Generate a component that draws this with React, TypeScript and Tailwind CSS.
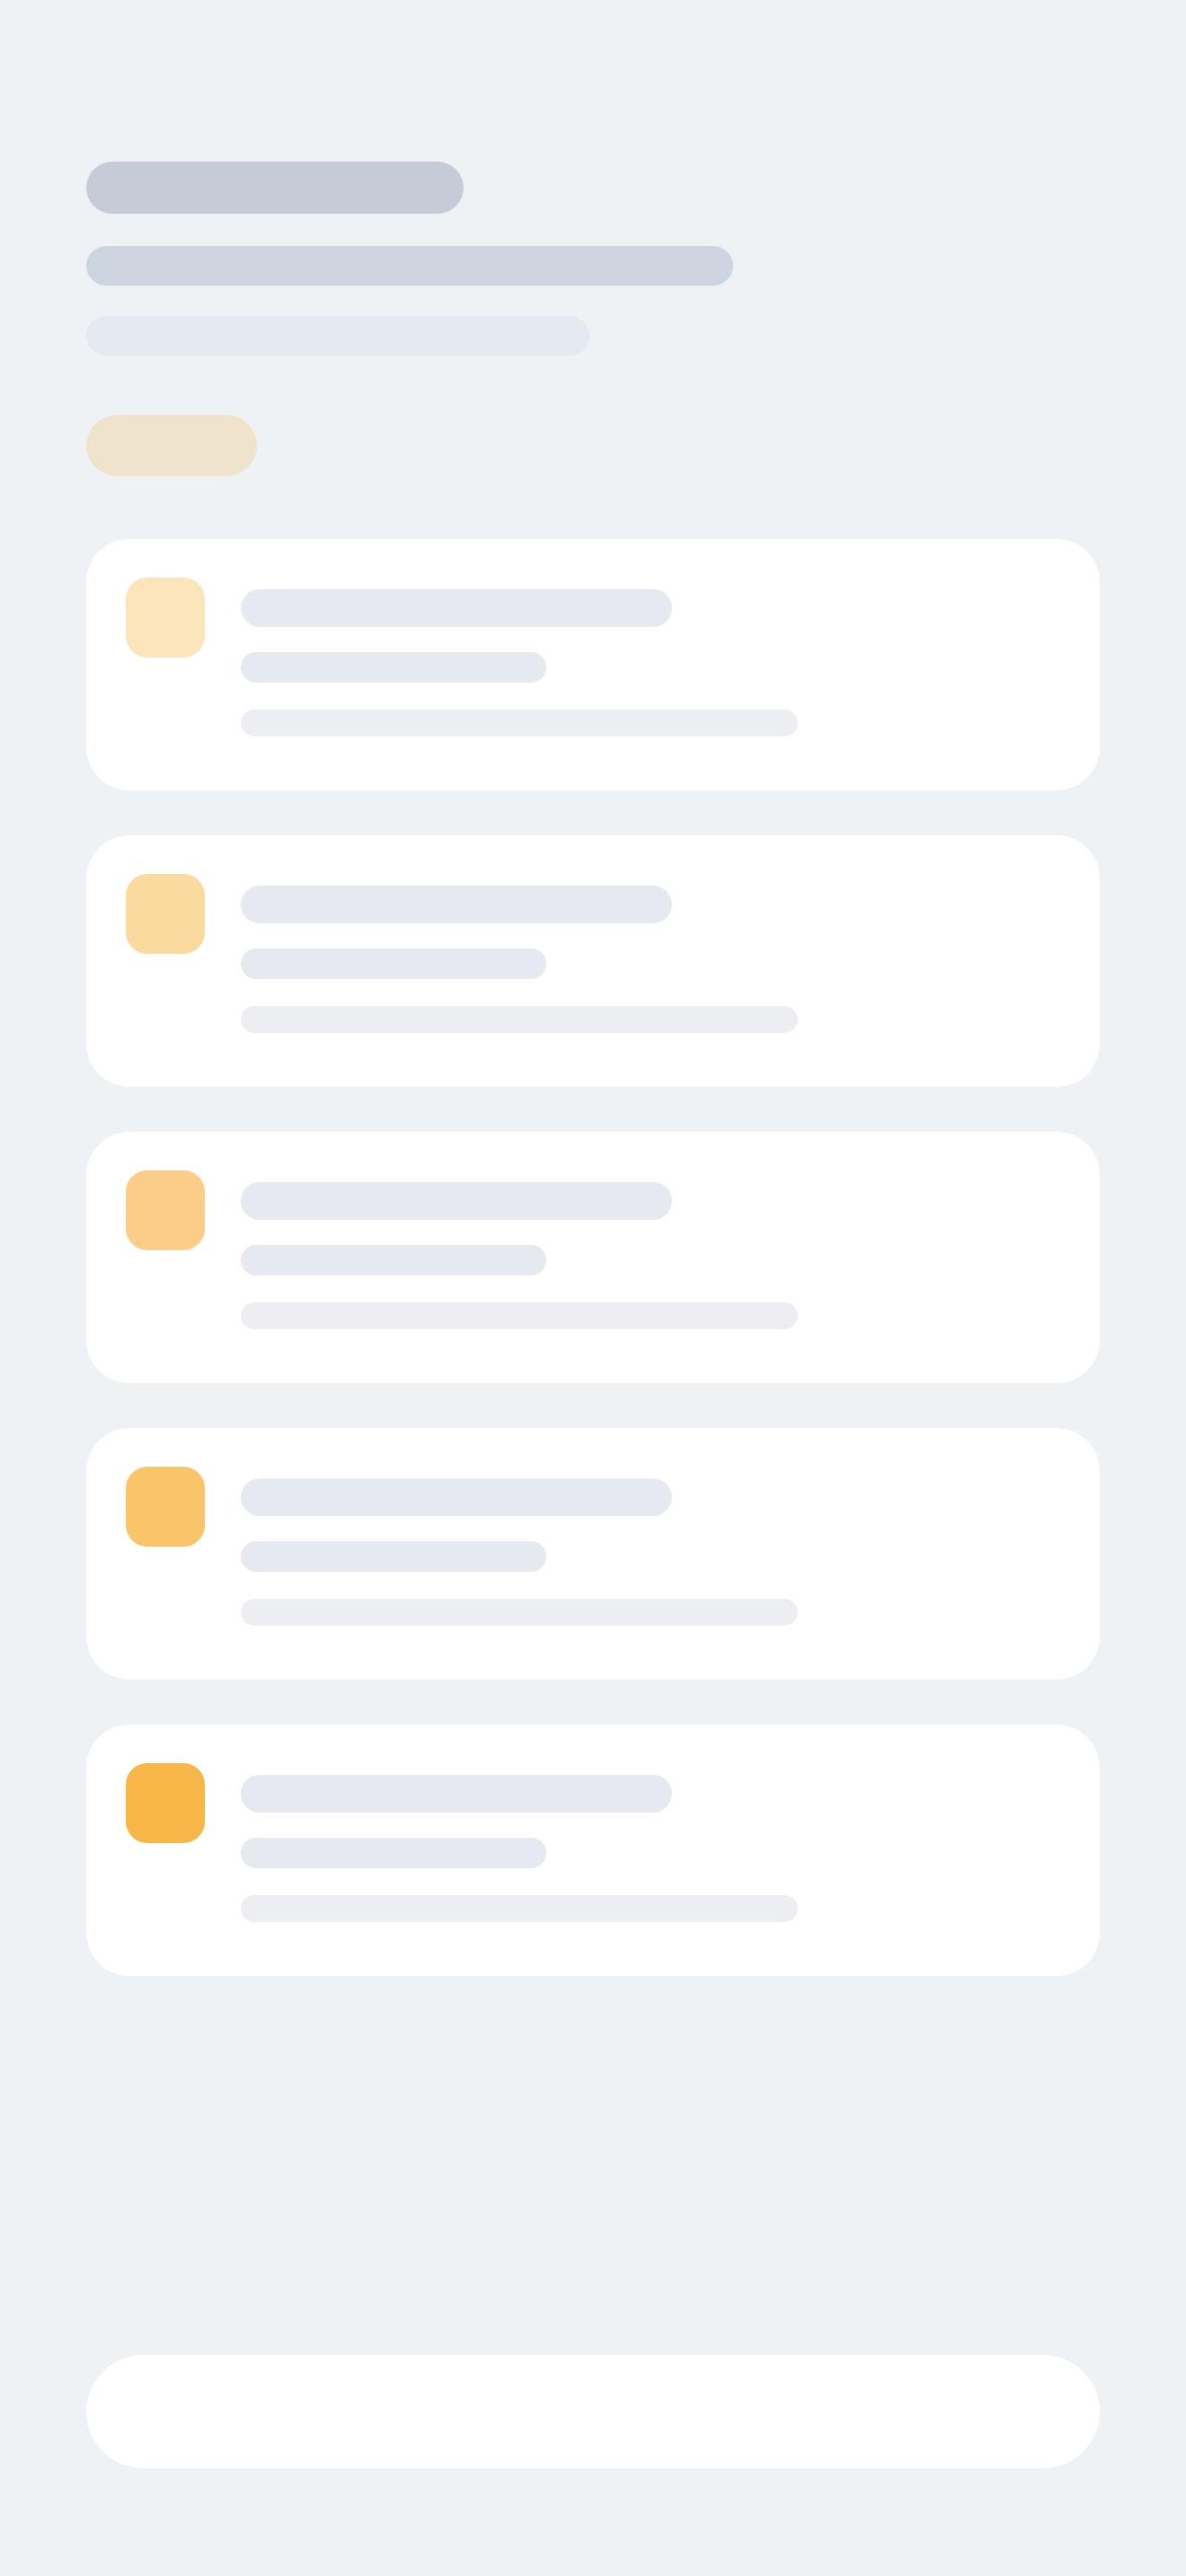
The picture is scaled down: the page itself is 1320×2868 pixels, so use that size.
import React from "react";

const iconColors = ["bg-[#fce5bb]", "bg-[#fbdaa0]", "bg-[#fccd89]", "bg-[#f9c46a]", "bg-[#f8b648]"];

function Card({ iconClass }: { iconClass: string }) {
  return (
    <div className="flex h-[280px] gap-[40px] rounded-[48px] bg-white pl-[44px] pt-[43px]">
      <div className={`h-[89px] w-[88px] shrink-0 rounded-[24px] ${iconClass}`} />
      <div className="mt-[13px] flex flex-col">
        <div className="h-[42px] w-[480px] rounded-full bg-[#e6e9ef]" />
        <div className="mt-[28px] h-[34px] w-[340px] rounded-full bg-[#e6e9ef]" />
        <div className="mt-[30px] h-[30px] w-[620px] rounded-full bg-[#eceef2]" />
      </div>
    </div>
  );
}

export default function App() {
  return (
    <div className="flex min-h-[2868px] flex-col bg-[#eef2f5] px-[96px] pb-[120px] pt-[180px]" style={{ fontFamily: "Inter, sans-serif" }}>
      <div className="h-[58px] w-[420px] rounded-full bg-[#c5ccd7]" />
      <div className="mt-[36px] h-[44px] w-[720px] rounded-full bg-[#cdd5e1]" />
      <div className="mt-[34px] h-[44px] w-[560px] rounded-full bg-[#e5e9f0]" />
      <div className="mt-[66px] h-[68px] w-[190px] rounded-full bg-[#f0e3cc]" />
      <div className="mt-[70px] flex flex-col gap-[50px]">
        {iconColors.map((c, i) => (
          <Card key={i} iconClass={c} />
        ))}
      </div>
      <div className="mt-auto h-[126px] w-full rounded-full bg-white" />
    </div>
  );
}
